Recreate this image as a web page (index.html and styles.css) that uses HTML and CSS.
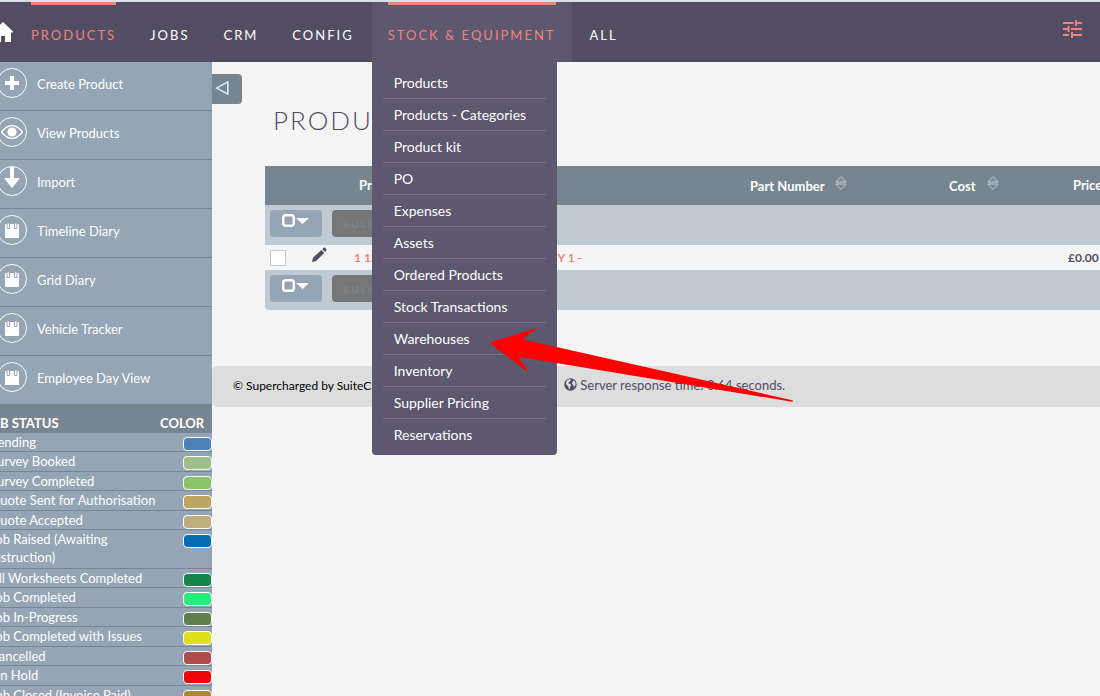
FILE: index.html
```html
<!DOCTYPE html>
<html lang="en">
<head>
<meta charset="utf-8">
<title>Products</title>
<meta name="viewport" content="width=device-width, initial-scale=1">
<link rel="stylesheet" href="styles.css">
</head>
<body>
<svg class="sprite" aria-hidden="true">
  <symbol id="i-cal" viewBox="0 0 28 28"><path fill="#fff" d="M7 8h14v14H7z"/><path fill="#fff" stroke="#95a5b5" d="M9 7h2.500v5.500H9zM16.500 7H19v5.500h-2.500z"/></symbol>
  <symbol id="i-sort" viewBox="0 0 12 14"><path fill="none" stroke="#c3cbd2" d="M.8 6 6 .7 11.200 6zM.8 8 6 13.300 11.200 8z"/></symbol>
  <symbol id="i-select" viewBox="0 0 28 14"><rect x="1.200" y="1.200" width="10.600" height="10.600" rx="2.500" fill="none" stroke="#fff" stroke-width="2.400"/><path fill="#fff" d="M14 4h13l-6.500 6z"/></symbol>
</svg>
<div class="app">
  <header class="topbar">
    <nav class="nav" aria-label="Main">
      <a class="home" href="#" aria-label="Home"><svg width="20" height="20" viewBox="0 0 20 20"><path fill="#fff" d="M10 0l10 9.500v1h-2V20h-6v-6H8v6H2v-9.500H0v-1z"/></svg></a>
      <a class="nav-link is-current" href="#"><span>PRODUCTS</span></a>
      <a class="nav-link" href="#"><span>JOBS</span></a>
      <a class="nav-link" href="#"><span>CRM</span></a>
      <a class="nav-link" href="#"><span>CONFIG</span></a>
      <div class="nav-group">
        <a class="nav-link is-current is-open" href="#"><span>STOCK &amp; EQUIPMENT</span></a>
        <ul class="menu">
          <li><a href="#">Products</a></li>
          <li><a href="#">Products - Categories</a></li>
          <li><a href="#">Product kit</a></li>
          <li><a href="#">PO</a></li>
          <li><a href="#">Expenses</a></li>
          <li><a href="#">Assets</a></li>
          <li><a href="#">Ordered Products</a></li>
          <li><a href="#">Stock Transactions</a></li>
          <li><a href="#">Warehouses</a></li>
          <li><a href="#">Inventory</a></li>
          <li><a href="#">Supplier Pricing</a></li>
          <li><a href="#">Reservations</a></li>
        </ul>
      </div>
      <a class="nav-link" href="#"><span>ALL</span></a>
    </nav>
    <button class="tune" type="button" aria-label="Settings"><svg width="19" height="18" viewBox="0 0 19 18"><path fill="none" stroke="#f08377" stroke-width="2" d="M0 3h10.500M13 0v6M13 3h6M0 9h6M5.500 6v6M8 9h11M0 15h6M9 12v6M9 15h10"/></svg></button>
  </header>

  <div class="body">
    <aside class="sidebar">
      <ul class="actions">
        <li><a href="#"><svg class="disc" viewBox="0 0 28 28"><path stroke="#fff" stroke-width="4" d="M14 7v14M7 14h14"/></svg><span>Create Product</span></a></li>
        <li><a href="#"><svg class="disc" viewBox="0 0 28 28"><path fill="none" stroke="#fff" stroke-width="1.300" d="M3.500 14Q14 1 24.500 14Q14 27 3.500 14z"/><circle cx="14" cy="14" r="4.600" fill="#fff"/></svg><span>View Products</span></a></li>
        <li><a href="#"><svg class="disc" viewBox="0 0 28 28"><path fill="#fff" d="M12 0h4v11h6l-8 10-8-10h6z"/></svg><span>Import</span></a></li>
        <li><a href="#"><svg class="disc"><use href="#i-cal"/></svg><span>Timeline Diary</span></a></li>
        <li><a href="#"><svg class="disc"><use href="#i-cal"/></svg><span>Grid Diary</span></a></li>
        <li><a href="#"><svg class="disc"><use href="#i-cal"/></svg><span>Vehicle Tracker</span></a></li>
        <li><a href="#"><svg class="disc"><use href="#i-cal"/></svg><span>Employee Day View</span></a></li>
      </ul>
      <table class="status">
        <thead><tr><th>JOB STATUS</th><th class="status-color">COLOR</th></tr></thead>
        <tbody>
          <tr><td>Pending</td><td><i class="swatch c-pending"></i></td></tr>
          <tr><td>Survey Booked</td><td><i class="swatch c-booked"></i></td></tr>
          <tr><td>Survey Completed</td><td><i class="swatch c-surveyed"></i></td></tr>
          <tr><td>Quote Sent for Authorisation</td><td><i class="swatch c-sent"></i></td></tr>
          <tr><td>Quote Accepted</td><td><i class="swatch c-accepted"></i></td></tr>
          <tr class="two-line"><td>Job Raised (Awaiting<br>Instruction)</td><td><i class="swatch c-raised"></i></td></tr>
          <tr><td>All Worksheets Completed</td><td><i class="swatch c-sheets"></i></td></tr>
          <tr><td>Job Completed</td><td><i class="swatch c-completed"></i></td></tr>
          <tr><td>Job In-Progress</td><td><i class="swatch c-progress"></i></td></tr>
          <tr><td>Job Completed with Issues</td><td><i class="swatch c-issues"></i></td></tr>
          <tr><td>Cancelled</td><td><i class="swatch c-cancelled"></i></td></tr>
          <tr><td>On Hold</td><td><i class="swatch c-hold"></i></td></tr>
          <tr><td>Job Closed (Invoice Paid)</td><td><i class="swatch c-closed"></i></td></tr>
        </tbody>
      </table>
    </aside>

    <main class="main">
      <button class="collapse" type="button" aria-label="Collapse sidebar"><svg width="14" height="14" viewBox="0 0 14 14"><path fill="none" stroke="#f5f5f5" stroke-width="1.400" d="M1.500 7 12.800 1v12z"/></svg></button>
      <h1>PRODUCTS</h1>
      <table class="list">
        <colgroup><col class="w-check"><col class="w-edit"><col><col class="w-part"><col class="w-cost"><col class="w-price"></colgroup>
        <thead>
          <tr><th></th><th></th><th>Product</th><th>Part Number <svg class="sort"><use href="#i-sort"/></svg></th><th>Cost <svg class="sort"><use href="#i-sort"/></svg></th><th>Price</th></tr>
        </thead>
        <tbody>
          <tr class="tools"><td colspan="6"><div class="tool-row"><button class="select" type="button" aria-label="Select records"><svg width="28" height="14"><use href="#i-select"/></svg></button><button class="bulk" type="button" disabled>BULK ACTION</button></div></td></tr>
          <tr class="record">
            <td><input type="checkbox" aria-label="Select row"></td>
            <td><a class="edit" href="#" aria-label="Edit"><svg width="16" height="16" viewBox="0 0 16 16"><path fill="#534d64" d="M1 15l1-4.200L10.300 3l3 3L5 14zM11.200 2.200 12.800.8q.8-.6 1.500 0l1 1.100q.6.800 0 1.500L14.100 5z"/></svg></a></td>
            <td><a class="product" href="#"><span>1 1/</span><span>Y 1 -</span></a></td>
            <td></td><td></td><td>£0.00</td>
          </tr>
          <tr class="tools"><td colspan="6"><div class="tool-row"><button class="select" type="button" aria-label="Select records"><svg width="28" height="14"><use href="#i-select"/></svg></button><button class="bulk" type="button" disabled>BULK ACTION</button></div></td></tr>
        </tbody>
      </table>
      <footer class="footer">
        <a href="#">© Supercharged by SuiteCRM</a>
        <p><svg width="13" height="13" viewBox="0 0 13 13"><circle cx="6.500" cy="6.500" r="6.200" fill="#534d64"/><path fill="#ddd" d="M3 2.200 5.500 1l1.300.7-.5 1.600-1.500.8-.3 1.400 2 .8.700 1.300-1.200 1.200-.2 2.400-1-.3-.6-2.700-1.600-1.300L2 5zM8.500 2l2 1.300 1.200 2-.6 2.600-1.400.8-.4-1.800L8 6l.2-1.500 1-.8z"/></svg> Server response time: 0.64 seconds.</p>
      </footer>
    </main>
  </div>
  <svg class="pointer" width="304" height="76" viewBox="490 327 304 76" aria-hidden="true"><path fill="#f00" d="M492 341.500 537.700 328 522 339.300 792.200 400.200Q793.800 401.200 792.200 401.800L518.300 356.800 529.500 373.300 491.500 344.500Q490.200 342.500 492 341.500z"/></svg>
</div>
</body>
</html>
```
FILE: styles.css
```css
* { box-sizing: border-box; }
body {
  margin: 0;
  background: #f5f5f5;
  color: #534d64;
  font: 13px/18px Lato, "Open Sans", sans-serif;
}
ul { list-style: none; margin: 0; padding: 0; }
a { color: inherit; text-decoration: none; }
button { border: 0; padding: 0; background: none; font: inherit; color: inherit; }
table { border-collapse: separate; border-spacing: 0; }
th, td { padding: 0; text-align: left; vertical-align: top; }
.sprite { display: none; }

.app {
  position: relative;
  display: flex;
  flex-direction: column;
  height: 100vh;
  overflow: hidden;
}

/* Top bar */
.topbar {
  display: flex;
  flex: none;
  justify-content: space-between;
  height: 62px;
  padding-right: 18px;
  border-top: 2px solid #dcdfe6;
  background: #534d64;
}
.nav { display: flex; gap: 2px; color: #fff; }
.home { width: 13px; padding-top: 20px; }
.home svg { display: block; margin-left: -7px; }
.nav-link {
  display: block;
  height: 60px;
  padding: 0 16px;
  letter-spacing: 2px;
}
.nav-link span {
  display: block;
  padding-top: 21px;
  border-top: 3px solid transparent;
}
.nav-link.is-current { color: #f08377; }
.nav-link.is-current span { border-color: #f08377; }
.nav-link.is-open { background: #5d576f; }
.nav-group { position: relative; }
.menu {
  position: absolute;
  z-index: 2;
  top: 100%;
  left: 0;
  width: 185px;
  padding: 5px 11px 4px;
  border-radius: 0 0 4px 4px;
  background: #5d576f;
  font-size: 14px;
}
.menu li { height: 32px; border-bottom: 1px solid #78738a; }
.menu li:last-child { border-color: transparent; }
.menu a { display: block; padding: 7px 11px; white-space: nowrap; }
.tune { align-self: flex-start; margin-top: 18px; }
.tune svg { display: block; }

/* Sidebar */
.body { display: flex; flex: 1; min-height: 0; }
.sidebar {
  flex: none;
  width: 212px;
  overflow: hidden;
  background: #95a5b5;
  color: #fff;
}
.actions li { height: 49px; border-bottom: 1px solid #778591; }
.actions li:last-child { border: 0; }
.actions a { display: flex; align-items: center; gap: 10px; padding-top: 6px; }
.actions span { padding-top: 2px; }
.disc {
  flex: none;
  width: 30px;
  height: 30px;
  margin-left: -3px;
  border: 1px solid #fff;
  border-radius: 50%;
}
.status { width: 228px; margin: -1px 0 0 -16px; }
.status th { height: 29px; padding: 10px 0 0; background: #778591; }
.status .status-color { width: 52px; }
.status tbody tr { height: 19px; }
.status tbody tr:nth-child(even) { height: 20px; }
.status tbody tr.two-line { height: 39px; }
.status tbody td { border-bottom: 1px solid #778591; white-space: nowrap; }
.status td:first-child { padding-left: 6px; }
.swatch {
  display: block;
  width: 29px;
  height: 14px;
  margin: 4px 0 -4px auto;
  border: 1px solid #fff;
  border-radius: 4px;
}
.c-pending { background: #4b82b8; }
.c-booked { background: #9dbf8a; }
.c-surveyed { background: #89c46b; }
.c-sent { background: #bea561; }
.c-accepted { background: #bdae80; }
.c-raised { background: #056bb3; }
.c-sheets { background: #17854a; }
.c-completed { background: #28eb80; }
.c-progress { background: #5f804b; }
.c-issues { background: #dfe01c; }
.c-cancelled { background: #b04b4b; }
.c-hold { background: #ea0606; }
.c-closed { background: #ad8737; }

/* Content */
.main { flex: 1; min-width: 0; padding-top: 12px; overflow: hidden; }
.collapse {
  display: block;
  width: 30px;
  height: 30px;
  padding: 0 0 2px 3px;
  border-radius: 0 4px 4px 0;
  background: #778591;
}
.collapse svg { display: block; }
h1 {
  margin: 0 0 30px 61px;
  font-size: 26px;
  line-height: 32px;
  font-weight: 300;
  letter-spacing: 2px;
}
.list {
  width: calc(100% - 53px);
  min-width: 948px;
  margin-left: 53px;
  border-radius: 0 0 4px 4px;
  overflow: hidden;
  table-layout: fixed;
}
.w-check { width: 35px; }
.w-edit { width: 49px; }
.w-part { width: 199px; }
.w-cost { width: 124px; }
.w-price { width: 150px; }
.list th { height: 39px; padding: 10px 10px 0; background: #778591; color: #fff; }
.sort { width: 12px; height: 14px; margin-left: 8px; vertical-align: 1px; }
.tools td { height: 40px; background: #bfcad3; }
.tool-row { display: flex; gap: 10px; padding: 5px; }
.select, .bulk { height: 27px; border-radius: 4px; }
.select { width: 52px; padding: 0 0 5px; background: #95a5b5; }
.select svg { display: block; margin: 0 auto; }
.bulk {
  padding: 0 11px;
  background: #777;
  color: #778591;
  font-size: 10px;
  font-weight: 700;
  letter-spacing: 2px;
}
.record td { height: 25px; padding: 4px 5px 0; font-size: 12px; font-weight: 700; }
.record input {
  display: block;
  appearance: none;
  width: 16px;
  height: 16px;
  margin: 1px 0 0;
  border: 1px solid #bfcad3;
  background: #fff;
}
.record td:nth-child(2) { padding: 2px 0 0 11px; }
.edit svg { display: block; }
.product {
  display: flex;
  justify-content: space-between;
  width: 228px;
  color: #f08377;
}
.footer {
  display: flex;
  margin-top: 56px;
  padding: 10px 21px 11px;
  border-radius: 5px 0 0 5px;
  background: #ddd;
}
.footer a { width: 331px; color: #000; font-size: 12px; line-height: 20px; }
.footer p { margin: 0; }
.footer svg { vertical-align: -1px; }

.pointer { position: absolute; z-index: 3; top: 327px; left: 490px; }
```
